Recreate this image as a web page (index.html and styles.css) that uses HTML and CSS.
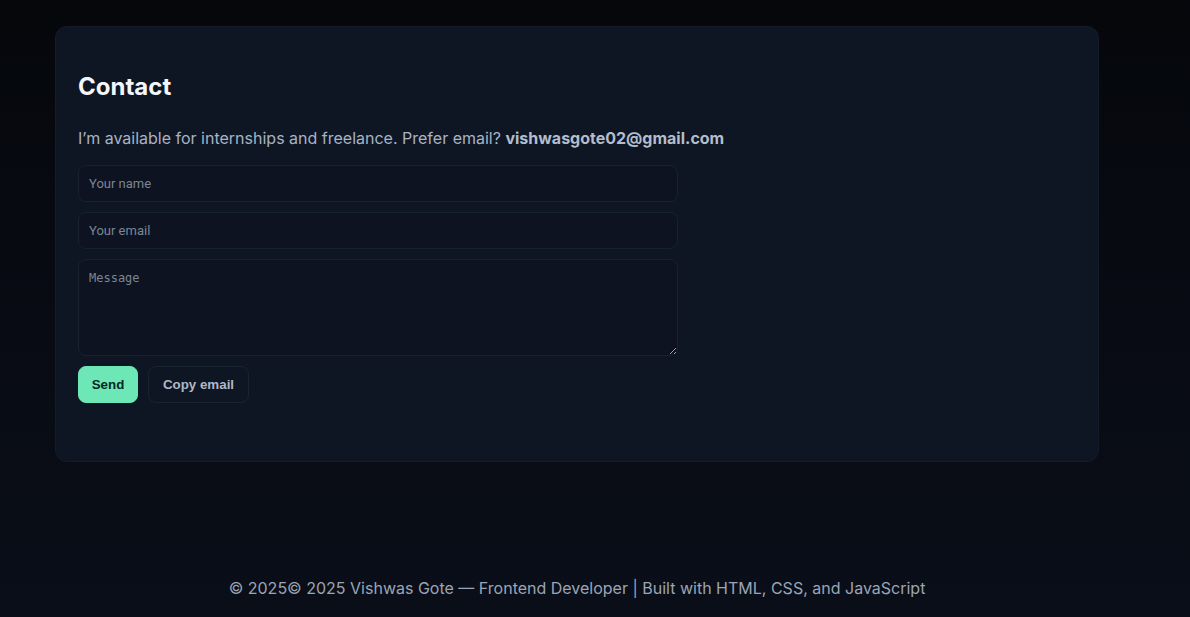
FILE: index.html
```html
<!DOCTYPE html>
<html lang="en">
<head>
<meta charset="utf-8">
<title>Contact</title>
<link rel="stylesheet" href="styles.css">
</head>
<body>
<div class="page">
  <section class="card">
    <h2 class="title">Contact</h2>
    <p class="lead">I’m available for internships and freelance. Prefer email? <strong class="mail">vishwasgote02@gmail.com</strong></p>
    <form class="form">
      <input class="field" type="text" placeholder="Your name">
      <input class="field" type="email" placeholder="Your email">
      <textarea class="field area" placeholder="Message"></textarea>
      <div class="actions">
        <button class="btn primary" type="button">Send</button>
        <button class="btn ghost" type="button">Copy email</button>
      </div>
    </form>
  </section>
  <footer class="foot">© 2025© 2025 Vishwas Gote — Frontend Developer | Built with HTML, CSS, and JavaScript</footer>
</div>
</body>
</html>
```
FILE: styles.css
```css
html, body {
  margin: 0;
  height: 100%;
}
body {
  background: linear-gradient(180deg, #05070b 0%, #080b13 50%, #0a0e18 100%);
  font-family: Inter, "Noto Sans", sans-serif;
  color: #e6ebf2;
  overflow: hidden;
}
.page {
  width: 1044px;
  margin-left: 55px;
  padding-top: 26px;
}
.card {
  box-sizing: border-box;
  height: 436px;
  background: #0f1623;
  border: 1px solid #141c29;
  border-radius: 12px;
  padding: 44px 22px 0 22px;
}
.title {
  margin: 0;
  font-size: 24px;
  font-weight: 700;
  line-height: 32px;
  color: #f3f6fa;
}
.lead {
  margin: 23px 0 0 0;
  font-size: 16px;
  line-height: 24px;
  color: #a8b3c4;
}
.mail {
  font-weight: 700;
  color: #b3bdcc;
}
.form {
  margin-top: 15px;
  width: 600px;
  display: flex;
  flex-direction: column;
  gap: 10px;
}
.field {
  box-sizing: border-box;
  height: 37px;
  width: 600px;
  margin: 0;
  padding: 0 10px;
  background: #0d1320;
  border: 1px solid #182131;
  border-radius: 8px;
  color: #d8dee8;
  font-family: Roboto, sans-serif;
  font-size: 13px;
  outline: none;
}
.field::placeholder {
  color: #7c8594;
}
.area {
  height: 97px;
  padding: 11px 10px 10px 10px;
  font-family: "DejaVu Sans Mono", monospace;
  font-size: 12px;
  line-height: 15px;
  resize: vertical;
}
.actions {
  display: flex;
  gap: 10px;
}
.btn {
  box-sizing: border-box;
  height: 37px;
  border-radius: 8px;
  font-family: "Liberation Sans", Arial, sans-serif;
  font-weight: 700;
  font-size: 13.33px;
  padding: 0;
  white-space: nowrap;
  cursor: pointer;
}
.primary {
  width: 60px;
  background: #6ee7b7;
  border: 1px solid #6ee7b7;
  color: #06281c;
}
.ghost {
  width: 101px;
  background: #0f1623;
  border: 1px solid #1a2332;
  color: #aeb8c8;
}
.foot {
  margin-top: 114px;
  text-align: center;
  font-size: 16px;
  line-height: 24px;
  color: #9aa5b6;
}
```
